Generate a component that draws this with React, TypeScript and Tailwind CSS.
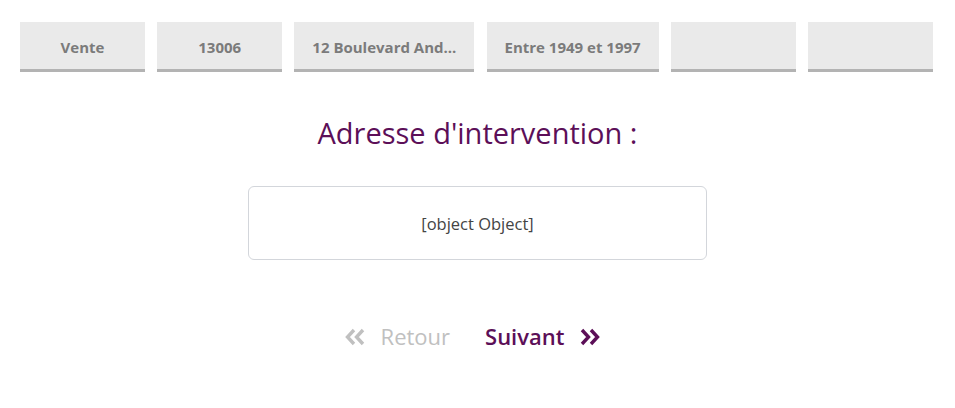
const tabs = [
  { label: 'Vente', width: 'w-[125px]' },
  { label: '13006', width: 'w-[125px]' },
  { label: '12 Boulevard And...', width: 'w-[180px]' },
  { label: 'Entre 1949 et 1997', width: 'w-[172px]' },
  { label: '', width: 'w-[125px]' },
  { label: '', width: 'w-[125px]' },
];

const Chevrons = ({ dir, className }: { dir: 'left' | 'right'; className?: string }) => (
  <svg
    viewBox="0 0 22 18"
    className={className}
    fill="none"
    stroke="currentColor"
    strokeWidth={3.4}
    strokeLinecap="butt"
    strokeLinejoin="miter"
  >
    {dir === 'left' ? (
      <>
        <path d="M10 2 L3.5 9 L10 16" />
        <path d="M19 2 L12.5 9 L19 16" />
      </>
    ) : (
      <>
        <path d="M3 2 L9.5 9 L3 16" />
        <path d="M12 2 L18.5 9 L12 16" />
      </>
    )}
  </svg>
);

export default function App() {
  return (
    <div className="w-[955px] h-[408px] bg-white font-['Open_Sans',sans-serif]">
      {/* Summary tabs */}
      <div className="flex justify-between pl-[20px] pt-[22px] pr-[22px]">
        {tabs.map((t, i) => (
          <div
            key={i}
            className={`${t.width} h-[50px] pt-[3px] bg-[#eaeaea] border-b-[3px] border-[#b3b3b3] flex items-center justify-center text-[15px] font-bold text-[#7b7b7b] whitespace-nowrap`}
          >
            {t.label}
          </div>
        ))}
      </div>

      <h1 className="mt-[41px] text-center text-[29px] leading-[40px] text-[#5c0f58]">
        Adresse d'intervention :
      </h1>

      <div className="mx-auto mt-[33px] w-[459px] h-[74px] border border-[#d3d6db] rounded-[6px] flex items-center justify-center pt-[3px] text-[16.5px] text-[#444]">
        [object Object]
      </div>

      {/* Navigation */}
      <div className="mt-[60px] flex justify-center items-center gap-[35px] text-[22px] pr-[10px]">
        <button className="flex items-center gap-[15px] text-[#c0c0c0]">
          <Chevrons dir="left" className="w-[22px] h-[18px]" />
          Retour
        </button>
        <button className="flex items-center gap-[15px] text-[#5c0f58] font-semibold">
          Suivant
          <Chevrons dir="right" className="w-[22px] h-[18px]" />
        </button>
      </div>
    </div>
  );
}
